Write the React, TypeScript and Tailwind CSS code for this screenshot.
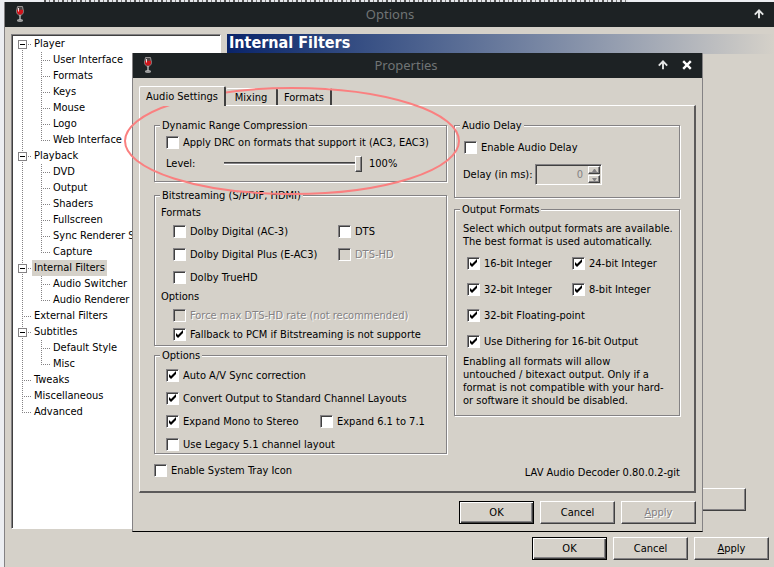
import { useState, type ReactNode } from 'react';

type TreeNode = { label: string; children?: string[] };

const tree: TreeNode[] = [
  { label: 'Player', children: ['User Interface', 'Formats', 'Keys', 'Mouse', 'Logo', 'Web Interface'] },
  { label: 'Playback', children: ['DVD', 'Output', 'Shaders', 'Fullscreen', 'Sync Renderer Settings', 'Capture'] },
  { label: 'Internal Filters', children: ['Audio Switcher', 'Audio Renderer'] },
  { label: 'External Filters' },
  { label: 'Subtitles', children: ['Default Style', 'Misc'] },
  { label: 'Tweaks' },
  { label: 'Miscellaneous' },
  { label: 'Advanced' },
];

const edge = {
  raised: 'border border-t-white border-l-white border-r-[#404040] border-b-[#404040] shadow-[inset_-1px_-1px_0_#848284]',
  sunken: 'border border-t-[#848284] border-l-[#848284] border-r-white border-b-white shadow-[inset_1px_1px_0_#404040]',
};

function WineGlass() {
  return (
    <svg viewBox="0 0 12 18" className="h-[18px] w-3" aria-hidden="true">
      <path d="M3.500 1.500h5l.9 4.700c0 2.400-1.300 4-3.400 4s-3.400-1.600-3.400-4z" fill="#4a4545" stroke="#a39e9e" strokeWidth="0.900" />
      <path d="M3 4.800h6l.1 1.600c0 1.900-1.200 3.200-3.100 3.200S2.900 8.300 2.900 6.400z" fill="#d0141b" />
      <path d="M4.500 3v3.500" stroke="#f3dcdc" strokeWidth="1" />
      <path d="M6 10v5" stroke="#c9c9c9" strokeWidth="1.300" />
      <ellipse cx="6" cy="15.500" rx="2.900" ry="0.900" fill="#8b8b8b" stroke="#c9c9c9" strokeWidth="0.700" />
    </svg>
  );
}

function ArrowUp() {
  return (
    <svg viewBox="0 0 10 10" className="size-[10px]" aria-hidden="true">
      <path d="M0.800 5.600 5 1.400l4.200 4.200M5 2v7.200" fill="none" stroke="#e4e6e6" strokeWidth="1.900" />
    </svg>
  );
}

function Cross() {
  return (
    <svg viewBox="0 0 10 10" className="size-[10px]" aria-hidden="true">
      <path d="M1.200 1.200 8.800 8.800M8.800 1.200 1.200 8.800" stroke="#fff" strokeWidth="2.400" />
    </svg>
  );
}

function TitleBar({ title, closable }: { title: string; closable?: boolean }) {
  return (
    <header className="grid h-[25px] grid-cols-[auto_1fr_auto] items-center bg-[#1d2224] pr-[10px] pb-px pl-[9px]">
      <WineGlass />
      <h1 className="text-center font-['Noto_Sans',sans-serif] text-[13px] leading-5 text-[#707475]">{title}</h1>
      <div className="flex justify-end gap-[14px]">
        <button type="button" aria-label="Shade"><ArrowUp /></button>
        {closable && <button type="button" aria-label="Close"><Cross /></button>}
      </div>
    </header>
  );
}

// Dotted guide lines of one tree cell, the trunk sits 9px from the left
function Guide({ last, first, branch = true, box }: { last?: boolean; first?: boolean; branch?: boolean; box?: boolean }) {
  return (
    <svg viewBox="0 0 19 16" className="h-4 w-[19px] shrink-0" shapeRendering="crispEdges" aria-hidden="true">
      <path d={`M9.500 ${first ? 8 : 0}V${last ? 8 : 16}`} stroke="#848284" strokeDasharray="1 1" />
      {branch && <path d="M9 8.500h10" stroke="#848284" strokeDasharray="1 1" />}
      {box && <path d="M5.500 4.500h8v8h-8z" fill="#fff" stroke="#848284" />}
      {box && <path d="M7 8.500h5" stroke="#000" />}
    </svg>
  );
}

function FilterTree() {
  return (
    <nav aria-label="Option pages" className={`w-[210px] shrink-0 overflow-hidden bg-white pt-px pl-px ${edge.sunken}`}>
      <ul>
        {tree.map((node, i) => (
          <li key={node.label}>
            <div className="flex h-4 items-center">
              <Guide first={i === 0} last={i === tree.length - 1} box={!!node.children} />
              <a href="#" className={`px-[2px] leading-4 ${node.label === 'Internal Filters' ? 'bg-[#d5d1c9]' : ''}`}>{node.label}</a>
            </div>
            {node.children && (
              <ul>
                {node.children.map((child, j) => (
                  <li key={child} className="flex h-4 items-center whitespace-nowrap">
                    <Guide branch={false} />
                    <Guide last={j === node.children!.length - 1} />
                    <a href="#" className="px-[2px] leading-4">{child}</a>
                  </li>
                ))}
              </ul>
            )}
          </li>
        ))}
      </ul>
    </nav>
  );
}

function Group({ title, className = '', children }: { title: string; className?: string; children: ReactNode }) {
  return (
    <fieldset className={`min-w-0 border border-[#848284] shadow-[1px_1px_0_#fff,inset_1px_1px_0_#fff] ${className}`}>
      <legend className="ml-[5px] bg-[#d5d1c9] px-[2px]">{title}</legend>
      {children}
    </fieldset>
  );
}

function Check({ label, checked = false, disabled, className = '' }: { label: string; checked?: boolean; disabled?: boolean; className?: string }) {
  const [on, setOn] = useState(checked);
  return (
    <label className={`flex h-[13px] items-center gap-1 whitespace-nowrap ${disabled ? 'text-[#848284] [text-shadow:1px_1px_0_#fff]' : ''} ${className}`}>
      <span className="grid shrink-0">
        <input
          type="checkbox"
          checked={on}
          disabled={disabled}
          onChange={() => setOn(!on)}
          className={`col-start-1 row-start-1 size-[13px] appearance-none bg-white disabled:bg-[#d5d1c9] ${edge.sunken}`}
        />
        {on && (
          <svg viewBox="0 0 13 13" className="pointer-events-none col-start-1 row-start-1 size-[13px]" aria-hidden="true">
            <path d="M3 5v3l2 2 5-5V2L5 7z" fill="#000" />
          </svg>
        )}
      </span>
      {label}
    </label>
  );
}

function PushButton({ children, primary, disabled }: { children: ReactNode; primary?: boolean; disabled?: boolean }) {
  return (
    <button
      type="button"
      disabled={disabled}
      className={`h-[23px] w-[75px] bg-[#d5d1c9] disabled:text-[#848284] disabled:[text-shadow:1px_1px_0_#fff] ${
        primary ? 'border border-black shadow-[inset_1px_1px_0_#fff,inset_-1px_-1px_0_#404040,inset_-2px_-2px_0_#848284]' : edge.raised
      }`}
    >
      {children}
    </button>
  );
}

function Buttons({ applyDisabled }: { applyDisabled?: boolean }) {
  return (
    <div className="flex justify-end gap-[6px]">
      <PushButton primary>OK</PushButton>
      <PushButton>Cancel</PushButton>
      <PushButton disabled={applyDisabled}><u>A</u>pply</PushButton>
    </div>
  );
}

function Tabs() {
  return (
    <div role="tablist" className="flex items-end">
      <button type="button" role="tab" aria-selected="true" className="z-10 -mb-px h-5 w-[87px] rounded-t-xs border-t border-r-2 border-l border-t-white border-r-[#404040] border-l-white bg-[#d5d1c9] pb-px">
        Audio Settings
      </button>
      <button type="button" role="tab" aria-selected="false" className="h-[17px] w-[52px] rounded-t-xs border-t border-r-2 border-t-white border-r-[#404040]">
        Mixing
      </button>
      <button type="button" role="tab" aria-selected="false" className="h-[17px] w-[54px] rounded-t-xs border-t border-r-2 border-t-white border-r-[#404040]">
        Formats
      </button>
    </div>
  );
}

function LevelSlider() {
  return (
    <div className="mt-[6px] flex h-4 items-center">
      <label htmlFor="level" className="w-[58px]">Level:</label>
      <input
        id="level"
        type="range"
        defaultValue={100}
        className="h-4 w-[138px] appearance-none bg-transparent [&::-webkit-slider-runnable-track]:h-[3px] [&::-webkit-slider-runnable-track]:border-t [&::-webkit-slider-runnable-track]:border-b [&::-webkit-slider-runnable-track]:border-t-[#404040] [&::-webkit-slider-runnable-track]:border-b-white [&::-webkit-slider-runnable-track]:bg-[#848284] [&::-webkit-slider-thumb]:-mt-[7px] [&::-webkit-slider-thumb]:h-4 [&::-webkit-slider-thumb]:w-[7px] [&::-webkit-slider-thumb]:appearance-none [&::-webkit-slider-thumb]:border [&::-webkit-slider-thumb]:border-t-white [&::-webkit-slider-thumb]:border-r-[#404040] [&::-webkit-slider-thumb]:border-b-[#404040] [&::-webkit-slider-thumb]:border-l-white [&::-webkit-slider-thumb]:bg-[#d5d1c9] [&::-webkit-slider-thumb]:shadow-[inset_-1px_-1px_0_#848284]"
      />
      <output htmlFor="level" className="ml-[7px]">100%</output>
    </div>
  );
}

function SpinButton({ label, path }: { label: string; path: string }) {
  return (
    <button type="button" disabled aria-label={label} className={`grid h-2 w-3 place-items-center bg-[#d5d1c9] ${edge.raised}`}>
      <svg viewBox="0 0 5 3" className="h-[3px] w-[5px]" aria-hidden="true"><path d={path} fill="#848284" /></svg>
    </button>
  );
}

function AudioSettings() {
  return (
    <div className="flex gap-[7px]">
      <div className="w-[293px] shrink-0 pb-[3px]">
        <Group title="Dynamic Range Compression" className="h-[63px]">
          <div className="pt-1 pl-[11px]">
            <Check label="Apply DRC on formats that support it (AC3, EAC3)" />
            <LevelSlider />
          </div>
        </Group>
        <Group title="Bitstreaming (S/PDIF, HDMI)" className="mt-[7px] h-[157px]">
          <div className="pt-1 pl-[6px]">
            <p>Formats</p>
            <div className="mt-[6px] grid grid-cols-[165px_1fr] gap-y-[10px] pl-3">
              <Check label="Dolby Digital (AC-3)" />
              <Check label="DTS" />
              <Check label="Dolby Digital Plus (E-AC3)" />
              <Check label="DTS-HD" disabled />
              <Check label="Dolby TrueHD" />
            </div>
            <p className="mt-[6px]">Options</p>
            <div className="mt-[6px] space-y-[6px] pl-3">
              <Check label="Force max DTS-HD rate (not recommended)" disabled />
              <Check label="Fallback to PCM if Bitstreaming is not supporte" checked />
            </div>
          </div>
        </Group>
        <Group title="Options" className="mt-[3px] h-[105px]">
          <div className="grid grid-cols-[154px_1fr] gap-y-[10px] pt-[7px] pl-[11px]">
            <Check label="Auto A/V Sync correction" checked className="col-span-2" />
            <Check label="Convert Output to Standard Channel Layouts" checked className="col-span-2" />
            <Check label="Expand Mono to Stereo" checked />
            <Check label="Expand 6.1 to 7.1" />
            <Check label="Use Legacy 5.1 channel layout" />
          </div>
        </Group>
        <Check label="Enable System Tray Icon" className="mt-[10px]" />
      </div>
      <div className="flex w-[227px] flex-col">
        <Group title="Audio Delay" className="h-[79px]">
          <div className="pt-[9px] pl-2">
            <Check label="Enable Audio Delay" className="pl-px" />
            <div className="mt-[10px] flex items-center">
              <label htmlFor="delay" className="w-[72px]">Delay (in ms):</label>
              <div className={`flex h-[21px] w-[67px] items-center pr-px ${edge.sunken}`}>
                <input id="delay" disabled defaultValue="0" className="w-0 flex-1 bg-transparent pr-[5px] text-right text-[#848284]" />
                <div className="flex flex-col gap-px">
                  <SpinButton label="Increase delay" path="M2 0h1l2 3H0z" />
                  <SpinButton label="Decrease delay" path="M0 0h5L3 3H2z" />
                </div>
              </div>
            </div>
          </div>
        </Group>
        <Group title="Output Formats" className="mt-[5px] h-[213px]">
          <div className="pt-[6px] pl-2">
            <p className="whitespace-nowrap">Select which output formats are available.<br />The best format is used automatically.</p>
            <div className="mt-[9px] grid grid-cols-[105px_1fr] gap-y-[13px] pl-1">
              <Check label="16-bit Integer" checked />
              <Check label="24-bit Integer" checked />
              <Check label="32-bit Integer" checked />
              <Check label="8-bit Integer" checked />
              <Check label="32-bit Floating-point" checked className="col-span-2" />
              <Check label="Use Dithering for 16-bit Output" checked className="col-span-2" />
            </div>
            <p className="mt-[7px] whitespace-nowrap">
              Enabling all formats will allow<br />untouched / bitexact output. Only if a<br />format is not compatible with your hard-<br />or software it should be disabled.
            </p>
          </div>
        </Group>
        <p className="mt-auto pb-px text-right whitespace-nowrap">LAV Audio Decoder 0.80.0.2-git</p>
      </div>
    </div>
  );
}

function PropertiesDialog() {
  return (
    <section aria-label="Properties" className="absolute top-[53px] right-[71px] left-[132px] border-r border-b border-l border-r-[#848284] border-b-black border-l-[#848284] bg-[#d5d1c9]">
      <TitleBar title="Properties" closable />
      <div className="px-[6px] pt-2 pb-[7px]">
        <Tabs />
        <div role="tabpanel" className="mb-2 border-t border-r-2 border-b-2 border-l border-t-white border-r-[#5c5a5a] border-b-[#5c5a5a] border-l-white px-[14px] pt-[13px] pb-[11px]">
          <AudioSettings />
        </div>
        <Buttons applyDisabled />
      </div>
    </section>
  );
}

export default function App() {
  return (
    <div className="relative flex min-h-screen flex-col overflow-hidden bg-[#eceef2] pl-1 font-['DejaVu_Sans_Condensed','Noto_Sans',sans-serif] text-[11px] leading-[13px] text-black">
      <div className="mr-[146px] ml-10 h-[2px] bg-[repeating-linear-gradient(90deg,#555_0_2px,#e4e6ea_2px_5px,#777_5px_6px,#e4e6ea_6px_9px)]" />
      <section aria-label="Options" className="flex flex-1 flex-col border-l border-[#848284] bg-[#d5d1c9]">
        <TitleBar title="Options" />
        <div className="flex flex-1 gap-[6px] pt-[7px] pl-[6px]">
          <FilterTree />
          <main className="flex flex-1 flex-col">
            <h2 className="h-5 bg-linear-to-r from-[#0a246a] to-[#d5d1c9] pl-[2px] text-base leading-[17px] font-bold text-white">Internal Filters</h2>
            <button type="button" aria-label="Reset" className={`mt-auto mr-7 mb-[18px] h-[23px] w-[75px] self-end ${edge.raised}`} />
          </main>
        </div>
        <div className="pt-2 pr-[5px] pb-[7px]">
          <Buttons />
        </div>
      </section>
      <PropertiesDialog />
      <svg viewBox="0 0 340 110" className="pointer-events-none absolute top-[86px] left-[122px] h-[110px] w-[340px]" aria-hidden="true">
        <ellipse cx="170" cy="55" rx="167" ry="53" fill="none" stroke="#fa8080" strokeWidth="2" />
      </svg>
    </div>
  );
}
